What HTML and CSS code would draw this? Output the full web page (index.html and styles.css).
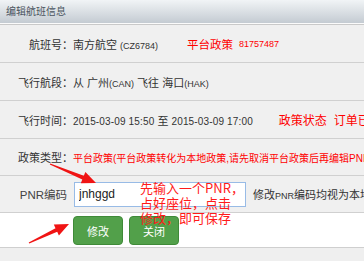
FILE: index.html
```html
<!DOCTYPE html>
<html lang="zh-CN">
<head>
    <meta charset="UTF-8">
    <meta name="viewport" content="width=device-width, initial-scale=1.0">
    <title>编辑航班信息</title>
    <link rel="stylesheet" href="styles.css">
</head>
<body>
    <div class="page">
        <div class="dialog-head">编辑航班信息</div>

        <div class="form">
            <div class="row">
                <span class="label">航班号：</span>
                <span class="value">南方航空 <span class="en">(CZ6784)</span></span>
                <span class="policy">平台政策</span>
                <span class="en red policy-no">81757487</span>
            </div>
            <div class="row">
                <span class="label">飞行航段：</span>
                <span class="value">从 广州<span class="en">(CAN)</span> 飞往 海口<span class="en">(HAK)</span></span>
            </div>
            <div class="row">
                <span class="label">飞行时间：</span>
                <span class="value"><span class="date">2015-03-09 15:50</span> 至 <span class="date">2015-03-09 17:00</span></span>
                <span class="policy status">政策状态</span>
                <span class="policy status-text">订单已生效</span>
            </div>
            <div class="row row-short">
                <span class="label">政策类型：</span>
                <span class="value red small">平台政策(平台政策转化为本地政策,请先取消平台政策后再编辑PNR)</span>
            </div>
            <div class="row row-short">
                <span class="label label-pnr">PNR编码</span>
                <input class="pnr-input" type="text" value="jnhggd">
                <span class="hint">修改<span class="en">PNR</span>编码均视为本地政策</span>
            </div>
        </div>

        <div class="actions">
            <button class="btn">修改</button>
            <button class="btn">关闭</button>
        </div>

        <!-- annotation overlay -->
        <div class="note">先输入一个PNR，<br>占好座位，点击<br>修改，即可保存</div>
        <svg class="arrows" width="364" height="261" viewBox="0 0 364 261">
            <polygon points="50.2,163.5 83.8,175.8 85.4,172.1 96,183 80.8,183.2 82.3,179.5 49.8,164.5" fill="#f01414"/>
            <polygon points="28.7,242.5 55.5,228.2 53.8,224.6 69,224 58.9,235.4 57.2,231.8 29.3,243.5" fill="#f01414"/>
        </svg>
    </div>
</body>
</html>
```

FILE: styles.css
```css
html, body {
    margin: 0;
    padding: 0;
    overflow: hidden;
}

body {
    background-color: #efefef;
    font-family: "Liberation Sans", "Noto Sans CJK SC", sans-serif;
    font-size: 11px;
    color: #333;
}

.page {
    position: relative;
    width: 364px;
    height: 261px;
    overflow: hidden;
    white-space: nowrap;
}

.dialog-head {
    height: 23px;
    line-height: 23px;
    padding-left: 6px;
    font-size: 10px;
    color: #4a545e;
    background: linear-gradient(#f1f4f6, #c4cbd2);
    border-bottom: 1px solid #fbfbfb;
}

.form {
    border-top: 1px solid #c9c9c9;
}

.row {
    display: flex;
    align-items: center;
    height: 37px;
    background-color: #f0f0f0;
    border-bottom: 1px solid #d0d0d0;
    box-shadow: 0 1px 0 #fafafa;
}

.row-short {
    height: 36px;
}

.label {
    flex: none;
    width: 73px;
    text-align: right;
}

.label-pnr {
    padding-right: 6px;
    width: 67px;
    font-size: 11.5px;
    color: #444;
}

.value {
    flex: none;
}

.en {
    font-size: 9px;
}

.date {
    font-size: 10px;
    letter-spacing: 0.15px;
}

.red {
    color: #f00;
}

.small {
    font-size: 10px;
}

.policy {
    flex: none;
    margin-left: 29px;
    font-size: 11.5px;
    color: #f00;
}

.policy-no {
    margin-left: 6px;
}

.status {
    margin-left: 26px;
    font-size: 12px;
}

.status-text {
    margin-left: 7px;
    font-size: 12px;
}

.pnr-input {
    flex: none;
    box-sizing: border-box;
    width: 172px;
    height: 25px;
    margin: 0 0 0 1px;
    padding: 0 4px;
    border: 1px solid #98bbe6;
    background-color: #fff;
    font-family: "Liberation Sans", sans-serif;
    font-size: 12px;
    color: #222;
    outline: none;
}

.hint {
    flex: none;
    margin-left: 7px;
}

.actions {
    display: flex;
    gap: 6px;
    height: 34px;
    padding-left: 73px;
    align-items: center;
    background-color: #fff;
    border-bottom: 1px solid #cfcfcf;
}

.btn {
    box-sizing: border-box;
    width: 50px;
    height: 29px;
    margin-top: 1px;
    padding: 0;
    border: 1px solid #3f8a38;
    border-radius: 4px;
    background-color: #52a04a;
    color: #fff;
    font-family: "Liberation Sans", "Noto Sans CJK SC", sans-serif;
    font-size: 11px;
}

.note {
    position: absolute;
    left: 140px;
    top: 180px;
    font-family: "Noto Sans CJK SC", sans-serif;
    font-size: 13px;
    line-height: 15px;
    color: #ff1a1a;
}

.arrows {
    position: absolute;
    left: 0;
    top: 0;
}
```
